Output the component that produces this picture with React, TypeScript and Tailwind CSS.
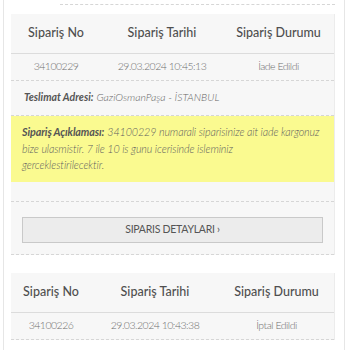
import React from 'react';

type Order = {
  no: string;
  date: string;
  status: string;
  cols: string;
  address?: string;
  note?: string[];
};

const orders: Order[] = [
  {
    no: '34100229',
    date: '29.03.2024 10:45:13',
    status: 'İade Edildi',
    cols: 'grid-cols-[90px_122px_1fr]',
    address: 'GaziOsmanPaşa - İSTANBUL',
    note: [
      '34100229 numarali siparisinize ait iade kargonuz',
      'bize ulasmistir. 7 ile 10 is gunu icerisinde isleminiz',
      'gerceklestirilecektir.',
    ],
  },
  {
    no: '34100226',
    date: '29.03.2024 10:43:38',
    status: 'İptal Edildi',
    cols: 'grid-cols-[80px_128px_1fr]',
  },
];

const OrderCard = ({ order }: { order: Order }) => {
  return (
    <div className="bg-[#f7f7f7] border-r border-[#ececec]">
      {/* Header */}
      <div className={`grid ${order.cols} h-[40px] items-center border-b border-[#dcdcdc] text-[12.5px] font-medium text-[#4f4f4f]`}>
        <div className="text-center">Sipariş No</div>
        <div className="text-center">Sipariş Tarihi</div>
        <div className="text-center">Sipariş Durumu</div>
      </div>
      {/* Values */}
      <div className={`grid ${order.cols} h-[27px] items-center border-b border-dashed border-[#d6d6d6] text-[10.5px] font-light tracking-[-0.5px] text-[#6f6f6f]`}>
        <div className="text-center">{order.no}</div>
        <div className="text-center">{order.date}</div>
        <div className="text-center">{order.status}</div>
      </div>
      {order.address && (
        <div className="h-[35px] flex items-center px-[13px] border-b border-dashed border-[#d6d6d6] text-[10.5px] italic text-[#666]">
          <span className="font-bold text-[#555] pr-[3px]">Teslimat Adresi:</span>
          <span className="font-light">{order.address}</span>
        </div>
      )}
      {order.note && (
        <>
          <div className="bg-[#fafa90] px-[11px] pt-[8px] pb-[6px] text-[10.75px] leading-[16.5px] tracking-[-0.1px] italic font-light text-[#5f5f5f] h-[66px] whitespace-nowrap">
            <span className="font-bold text-[#555] pr-[3px]">Sipariş Açıklaması:</span>
            {order.note[0]}
            <br />
            {order.note[1]}
            <br />
            {order.note[2]}
          </div>
          <div className="h-[20px] border-b border-dashed border-[#d6d6d6]" />
          <div className="px-[11px] pt-[13px] pb-[11px] border-b border-dashed border-[#d6d6d6]">
            <button className="w-full h-[26px] bg-[#ececec] border border-[#c9c9c9] text-[10.5px] text-[#555] tracking-tight">
              SIPARIS DETAYLARI ›
            </button>
          </div>
        </>
      )}
    </div>
  );
};

export default function App() {
  return (
    <div className="w-[350px] h-[350px] overflow-hidden bg-white" style={{ fontFamily: 'Lato, "Noto Sans", sans-serif' }}>
      <div className="ml-[3px] w-[342px] h-full border-x border-[#e6e6e6] pl-[7px] pr-[9px]">
        <div className="ml-[49px] h-[5px] border-b border-dashed border-[#d6d6d6]" />
        <div className="mt-[9px]">
          <OrderCard order={orders[0]} />
        </div>
        <div className="mt-[18px]">
          <OrderCard order={orders[1]} />
        </div>
      </div>
    </div>
  );
}
